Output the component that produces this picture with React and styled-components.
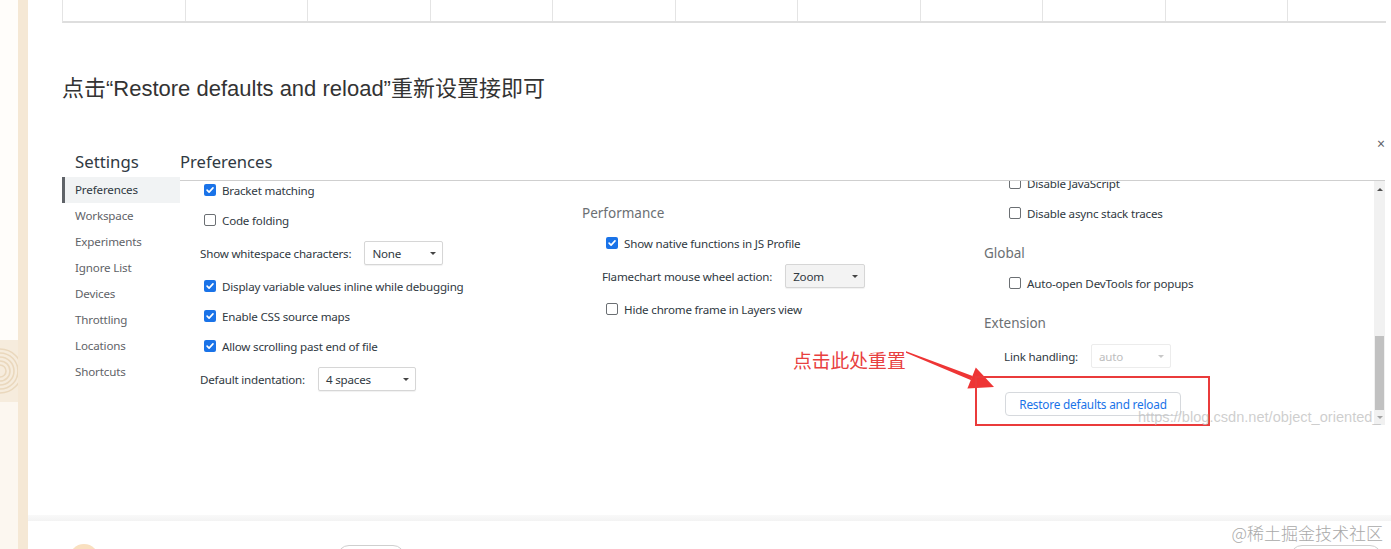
import React from 'react';
import styled, { createGlobalStyle } from 'styled-components';

const UI = `"Noto Sans", "Open Sans", sans-serif`;
const ARIAL_CJK = `"Liberation Sans", "Noto Sans CJK SC", sans-serif`;

const Global = createGlobalStyle`
  html, body { margin: 0; padding: 0; background: #fff; }
  body { width: 1391px; height: 549px; overflow: hidden; }
  #root { height: 549px; }
`;

const Page = styled.div`
  display: flex;
  height: 549px;
  overflow: hidden;
  background: #fff;
`;

const LeftDecor = styled.div`
  width: 18px;
  flex-shrink: 0;
  display: flex;
  flex-direction: column;
`;

const DecorTop = styled.div`
  height: 340px;
  flex-shrink: 0;
  background: #fffdfa;
`;

const DecorPattern = styled.div`
  height: 62px;
  flex-shrink: 0;
  background: #f6ecdd;
  display: flex;
`;

const DecorBottom = styled.div`
  flex: 1;
  background: #fcf7f0;
`;

const Strip = styled.div`
  width: 10px;
  flex-shrink: 0;
  background: #f5e8d5;
`;

const Main = styled.div`
  flex: 1;
  display: flex;
  flex-direction: column;
  position: relative;
  & > * { flex-shrink: 0; }
`;

const TopTable = styled.div`
  margin-left: 34px;
  width: 1323px;
  height: 21px;
  display: grid;
  grid-template-columns: repeat(10, 122.5px) 1fr;
  border-bottom: 2px solid #dedede;
  border-left: 1px solid #e4e4e4;
`;

const Cell = styled.div`
  border-right: 1px solid #e4e4e4;
  &:last-child { border-right: none; }
`;

const Heading = styled.h1`
  margin: 51px 0 0 34px;
  font-family: ${ARIAL_CJK};
  font-weight: 400;
  font-size: 22px;
  line-height: 30px;
  color: #333;
`;

const Panel = styled.div`
  margin: 36px 0 0 34px;
  width: 1323px;
  height: 286px;
  display: flex;
  font-family: ${UI};
`;

const Sidebar = styled.nav`
  width: 118px;
  display: flex;
  flex-direction: column;
`;

const SidebarTitle = styled.div`
  padding: 10px 0 3px 13px;
  font-size: 16.8px;
  line-height: 24px;
  color: #303942;
`;

const NavItem = styled.div`
  height: 26px;
  line-height: 26px;
  font-size: 11.6px;
  letter-spacing: -0.15px;
  color: ${p => (p.$active ? '#303942' : '#5f6368')};
  padding-left: ${p => (p.$active ? '10px' : '13px')};
  background: ${p => (p.$active ? '#f1f3f4' : 'transparent')};
  border-left: ${p => (p.$active ? '3px solid #5f6368' : 'none')};
`;

const Content = styled.section`
  flex: 1;
  display: flex;
  flex-direction: column;
`;

const ContentHeader = styled.div`
  height: 40px;
  border-bottom: 1px solid #cfcfcf;
  display: flex;
  justify-content: space-between;
  align-items: flex-start;
`;

const ContentTitle = styled.div`
  padding-top: 10px;
  font-size: 16.6px;
  line-height: 24px;
  color: #303942;
`;

const Close = styled.div`
  margin-top: -2px;
  font-size: 14px;
  line-height: 12px;
  color: #5f6368;
`;

const Body = styled.div`
  display: flex;
  height: 244px;
`;

const Columns = styled.div`
  flex: 1;
  display: grid;
  grid-template-columns: 402px 402px 1fr;
  overflow: hidden;
  align-items: start;
`;

const Column = styled.div`
  display: flex;
  flex-direction: column;
  margin-top: ${p => p.$offset}px;
`;

const SectionTitle = styled.div`
  margin-top: ${p => p.$mt}px;
  height: 30px;
  line-height: 30px;
  font-size: 13.5px;
  color: #6b6f73;
`;

const CheckRow = styled.label`
  height: 30px;
  display: flex;
  align-items: center;
  gap: 6px;
  padding-left: ${p => p.$indent}px;
  font-size: 11.6px;
  letter-spacing: -0.2px;
  color: #303942;
`;

const Box = styled.span`
  width: 12px;
  height: 12px;
  flex-shrink: 0;
  box-sizing: border-box;
  border-radius: 2px;
  display: flex;
  align-items: center;
  justify-content: center;
  background: ${p => (p.$checked ? '#1a73e8' : '#fff')};
  border: ${p => (p.$checked ? 'none' : '1px solid #6b6f73')};
`;

const SelectRow = styled.div`
  height: 36px;
  display: flex;
  align-items: center;
  gap: 13px;
  padding-left: 20px;
  font-size: 11.6px;
  letter-spacing: -0.2px;
  color: #303942;
`;

const Select = styled.div`
  width: ${p => p.$width}px;
  height: 24px;
  box-sizing: border-box;
  border: 1px solid ${p => (p.$disabled ? '#ececec' : '#d6d6d6')};
  border-radius: 2px;
  background: ${p => (p.$tinted ? '#f3f3f3' : '#fff')};
  color: ${p => (p.$disabled ? '#bdbdbd' : '#303942')};
  display: flex;
  align-items: center;
  justify-content: space-between;
  padding: 0 6px 0 7px;
  box-shadow: ${p => (p.$disabled ? 'none' : '0 1px 1px rgba(0,0,0,0.06)')};
`;

const Caret = styled.span`
  width: 0;
  height: 0;
  border-left: 3px solid transparent;
  border-right: 3px solid transparent;
  border-top: 3px solid ${p => (p.$disabled ? '#c8c8c8' : '#444')};
`;

const ResetButton = styled.button`
  margin: 18px 0 0 21px;
  width: 176px;
  height: 24px;
  border: 1px solid #d6d9dd;
  border-radius: 4px;
  background: #fff;
  color: #1a73e8;
  font-family: ${UI};
  font-size: 11.8px;
  letter-spacing: -0.2px;
  padding: 0;
  align-self: flex-start;
`;

const Scrollbar = styled.div`
  width: 11px;
  background: #f1f1f1;
  display: flex;
  flex-direction: column;
  align-items: center;
`;

const ScrollArrow = styled.div`
  height: ${p => p.$h}px;
  display: flex;
  align-items: center;
  justify-content: center;
  &::after {
    content: '';
    width: 0;
    height: 0;
    border-left: 3px solid transparent;
    border-right: 3px solid transparent;
    ${p => (p.$up ? 'border-bottom: 3px solid #505050;' : 'border-top: 3px solid #a3a3a3;')}
  }
`;

const ScrollSpace = styled.div`
  flex: 1;
`;

const Thumb = styled.div`
  width: 9px;
  height: 74px;
  background: #c1c1c1;
`;

const Footer = styled.footer`
  margin-top: 89px;
  display: flex;
  flex-direction: column;
  & > * { flex-shrink: 0; }
`;

const FooterBand = styled.div`
  height: 6px;
  background: linear-gradient(#f9f9f9, #f3f3f3);
`;

const FooterRow = styled.div`
  height: 23px;
  display: flex;
  justify-content: flex-end;
  align-items: center;
  padding-right: 8px;
  font-family: "Noto Sans CJK SC", sans-serif;
  font-size: 17px;
  color: #a9a9a9;
  font-weight: 300;
`;

const BottomRow = styled.div`
  height: 10px;
  display: flex;
  align-items: flex-start;
  overflow: hidden;
`;

const Avatar = styled.div`
  margin: 0 0 0 41px;
  width: 30px;
  height: 30px;
  border-radius: 50%;
  background: #f9e0c0;
`;

const Pill = styled.div`
  margin: 1px 0 0 ${p => p.$ml}px;
  width: ${p => p.$w}px;
  height: 24px;
  border-radius: 12px;
  border: 1px solid #cfcfcf;
  box-sizing: border-box;
`;

const Annotation = styled.div`
  position: absolute;
  left: 765px;
  top: 349px;
  font-family: "Noto Sans CJK SC", sans-serif;
  font-size: 18.8px;
  line-height: 22px;
  color: #e8403f;
`;

const RedBox = styled.div`
  position: absolute;
  left: 947px;
  top: 376px;
  width: 235px;
  height: 50px;
  box-sizing: border-box;
  border: 2px solid #ea3b3b;
  pointer-events: none;
`;

const ArrowSvg = styled.svg`
  position: absolute;
  left: 877px;
  top: 345px;
  overflow: visible;
`;

const CsdnMark = styled.div`
  position: absolute;
  left: 1110px;
  top: 408px;
  font-family: "Liberation Sans", sans-serif;
  font-size: 14.6px;
  line-height: 18px;
  color: rgba(190, 190, 190, 0.75);
  white-space: nowrap;
`;

function Checkbox({ checked }) {
  return (
    <Box $checked={checked}>
      {checked && (
        <svg width="10" height="10" viewBox="0 0 11 11">
          <path d="M2.3 5.6 L4.5 7.8 L8.8 3.2" fill="none" stroke="#fff" strokeWidth="1.8" strokeLinecap="round" strokeLinejoin="round" />
        </svg>
      )}
    </Box>
  );
}

function Item({ item, indent }) {
  if (item.type === 'heading') return <SectionTitle $mt={item.mt ?? 9}>{item.label}</SectionTitle>;
  if (item.type === 'check')
    return (
      <CheckRow $indent={indent}>
        <Checkbox checked={item.checked} />
        <span>{item.label}</span>
      </CheckRow>
    );
  if (item.type === 'select')
    return (
      <SelectRow>
        <span>{item.label}</span>
        <Select $width={item.width} $tinted={item.tinted} $disabled={item.disabled}>
          <span>{item.value}</span>
          <Caret $disabled={item.disabled} />
        </Select>
      </SelectRow>
    );
  return <ResetButton>{item.label}</ResetButton>;
}

const columns = [
  {
    offset: -6,
    indent: 24,
    items: [
      { type: 'check', label: 'Bracket matching', checked: true },
      { type: 'check', label: 'Code folding', checked: false },
      { type: 'select', label: 'Show whitespace characters:', value: 'None', width: 79 },
      { type: 'check', label: 'Display variable values inline while debugging', checked: true },
      { type: 'check', label: 'Enable CSS source maps', checked: true },
      { type: 'check', label: 'Allow scrolling past end of file', checked: true },
      { type: 'select', label: 'Default indentation:', value: '4 spaces', width: 98 },
    ],
  },
  {
    offset: 8,
    indent: 24,
    items: [
      { type: 'heading', label: 'Performance' },
      { type: 'check', label: 'Show native functions in JS Profile', checked: true },
      { type: 'select', label: 'Flamechart mouse wheel action:', value: 'Zoom', width: 80, tinted: true },
      { type: 'check', label: 'Hide chrome frame in Layers view', checked: false },
    ],
  },
  {
    offset: -13,
    indent: 25,
    items: [
      { type: 'check', label: 'Disable JavaScript', checked: false },
      { type: 'check', label: 'Disable async stack traces', checked: false },
      { type: 'heading', label: 'Global', mt: 10 },
      { type: 'check', label: 'Auto-open DevTools for popups', checked: false },
      { type: 'heading', label: 'Extension', mt: 10 },
      { type: 'select', label: 'Link handling:', value: 'auto', width: 80, disabled: true },
      { type: 'button', label: 'Restore defaults and reload' },
    ],
  },
];

const navItems = ['Preferences', 'Workspace', 'Experiments', 'Ignore List', 'Devices', 'Throttling', 'Locations', 'Shortcuts'];

export default function App() {
  return (
    <>
      <Global />
      <Page>
        <LeftDecor>
          <DecorTop />
          <DecorPattern>
            <svg width="18" height="62" viewBox="0 0 18 62">
              {[6, 10, 14, 18, 22].map(r => (
                <circle key={r} cx="0" cy="31" r={r} fill="none" stroke="#ead8bd" strokeWidth="1.6" />
              ))}
            </svg>
          </DecorPattern>
          <DecorBottom />
        </LeftDecor>
        <Strip />
        <Main>
          <TopTable>
            {Array.from({ length: 11 }).map((_, i) => (
              <Cell key={i} />
            ))}
          </TopTable>
          <Heading>点击“Restore defaults and reload”重新设置接即可</Heading>
          <Panel>
            <Sidebar>
              <SidebarTitle>Settings</SidebarTitle>
              {navItems.map((n, i) => (
                <NavItem key={n} $active={i === 0}>
                  {n}
                </NavItem>
              ))}
            </Sidebar>
            <Content>
              <ContentHeader>
                <ContentTitle>Preferences</ContentTitle>
                <Close>×</Close>
              </ContentHeader>
              <Body>
                <Columns>
                  {columns.map((c, i) => (
                    <Column key={i} $offset={c.offset}>
                      {c.items.map((it, j) => (
                        <Item key={j} item={it} indent={c.indent} />
                      ))}
                    </Column>
                  ))}
                </Columns>
                <Scrollbar>
                  <ScrollArrow $up $h={16} />
                  <ScrollSpace />
                  <Thumb />
                  <ScrollArrow $h={15} />
                </Scrollbar>
              </Body>
            </Content>
          </Panel>
          <Footer>
            <FooterBand />
            <FooterRow>@稀土掘金技术社区</FooterRow>
            <BottomRow>
              <Avatar />
              <Pill $ml={238} $w={68} />
              <Pill $ml={885} $w={92} />
            </BottomRow>
          </Footer>

          <Annotation>点击此处重置</Annotation>
          <ArrowSvg width="125" height="55" viewBox="0 0 125 55">
            <polygon points="1,6.3 67.6,31 66.2,35.2 1,7.7" fill="#ee3535" />
            <polygon points="89,42 70.8,22.6 62.4,43.6" fill="#ee3535" />
          </ArrowSvg>
          <RedBox />
          <CsdnMark>https://blog.csdn.net/object_oriented_</CsdnMark>
        </Main>
      </Page>
    </>
  );
}
